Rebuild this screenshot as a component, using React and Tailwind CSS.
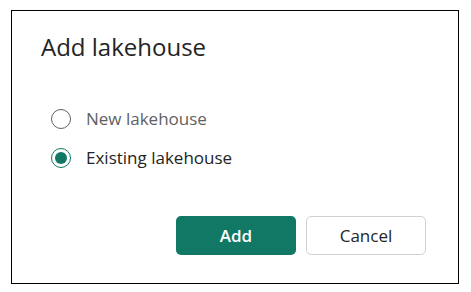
import { useState } from "react";

const Radio = ({ checked, label, onSelect }) => (
  <label
    onClick={onSelect}
    className="flex items-center gap-[15px] h-[39px] cursor-pointer"
  >
    <span
      className={`flex items-center justify-center w-[20px] h-[20px] rounded-full border ${
        checked ? "border-[#117865]" : "border-[#616161]"
      }`}
    >
      {checked && <span className="w-[12px] h-[12px] rounded-full bg-[#117865]" />}
    </span>
    <span className={`text-[17px] ${checked ? "text-[#242424]" : "text-[#616161]"}`}>{label}</span>
  </label>
);

export default function App() {
  const [choice, setChoice] = useState("existing");

  return (
    <div className="w-[471px] h-[292px] bg-white pt-[10px] pl-[11px] font-['Open_Sans',sans-serif]">
      <div className="w-[448px] h-[274px] border border-black flex flex-col px-[29px]">
        <h1 className="mt-[20px] text-[24px] leading-[32px] font-medium text-[#242424]">Add lakehouse</h1>

        <div className="mt-[36px] pl-[10px] flex flex-col">
          <Radio checked={choice === "new"} label="New lakehouse" onSelect={() => setChoice("new")} />
          <Radio checked={choice === "existing"} label="Existing lakehouse" onSelect={() => setChoice("existing")} />
        </div>

        <div className="mt-auto mb-[28px] flex justify-end gap-[10px] pr-[3px]">
          <button className="w-[120px] h-[39px] rounded-[5px] bg-[#117865] text-white text-[17px] font-semibold">
            Add
          </button>
          <button className="w-[120px] h-[39px] rounded-[5px] border border-[#d1d1d1] bg-white text-[#242424] text-[17px]">
            Cancel
          </button>
        </div>
      </div>
    </div>
  );
}
